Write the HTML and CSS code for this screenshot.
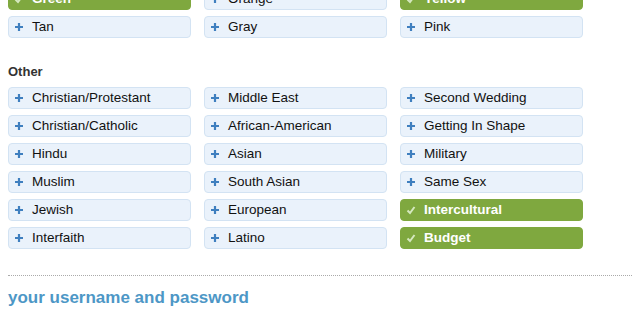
FILE: index.html
```html
<!DOCTYPE html>
<html lang="en">
<head>
    <meta charset="UTF-8">
    <title>Wedding style</title>
    <link rel="stylesheet" href="styles.css">
</head>
<body>
    <div class="page">
        <div class="tagGrid">
            <div class="tag on"><svg class="mark" viewBox="0 0 10 10"><path d="M1.5 5.5 L4 8 L8.5 2"/></svg>Green</div>
            <div class="tag"><svg class="mark" viewBox="0 0 10 10"><path d="M5 1 V9 M1 5 H9"/></svg>Orange</div>
            <div class="tag on"><svg class="mark" viewBox="0 0 10 10"><path d="M1.5 5.5 L4 8 L8.5 2"/></svg>Yellow</div>
            <div class="tag"><svg class="mark" viewBox="0 0 10 10"><path d="M5 1 V9 M1 5 H9"/></svg>Tan</div>
            <div class="tag"><svg class="mark" viewBox="0 0 10 10"><path d="M5 1 V9 M1 5 H9"/></svg>Gray</div>
            <div class="tag"><svg class="mark" viewBox="0 0 10 10"><path d="M5 1 V9 M1 5 H9"/></svg>Pink</div>
        </div>

        <h3 class="groupTitle">Other</h3>
        <div class="tagGrid">
            <div class="tag"><svg class="mark" viewBox="0 0 10 10"><path d="M5 1 V9 M1 5 H9"/></svg>Christian/Protestant</div>
            <div class="tag"><svg class="mark" viewBox="0 0 10 10"><path d="M5 1 V9 M1 5 H9"/></svg>Middle East</div>
            <div class="tag"><svg class="mark" viewBox="0 0 10 10"><path d="M5 1 V9 M1 5 H9"/></svg>Second Wedding</div>
            <div class="tag"><svg class="mark" viewBox="0 0 10 10"><path d="M5 1 V9 M1 5 H9"/></svg>Christian/Catholic</div>
            <div class="tag"><svg class="mark" viewBox="0 0 10 10"><path d="M5 1 V9 M1 5 H9"/></svg>African-American</div>
            <div class="tag"><svg class="mark" viewBox="0 0 10 10"><path d="M5 1 V9 M1 5 H9"/></svg>Getting In Shape</div>
            <div class="tag"><svg class="mark" viewBox="0 0 10 10"><path d="M5 1 V9 M1 5 H9"/></svg>Hindu</div>
            <div class="tag"><svg class="mark" viewBox="0 0 10 10"><path d="M5 1 V9 M1 5 H9"/></svg>Asian</div>
            <div class="tag"><svg class="mark" viewBox="0 0 10 10"><path d="M5 1 V9 M1 5 H9"/></svg>Military</div>
            <div class="tag"><svg class="mark" viewBox="0 0 10 10"><path d="M5 1 V9 M1 5 H9"/></svg>Muslim</div>
            <div class="tag"><svg class="mark" viewBox="0 0 10 10"><path d="M5 1 V9 M1 5 H9"/></svg>South Asian</div>
            <div class="tag"><svg class="mark" viewBox="0 0 10 10"><path d="M5 1 V9 M1 5 H9"/></svg>Same Sex</div>
            <div class="tag"><svg class="mark" viewBox="0 0 10 10"><path d="M5 1 V9 M1 5 H9"/></svg>Jewish</div>
            <div class="tag"><svg class="mark" viewBox="0 0 10 10"><path d="M5 1 V9 M1 5 H9"/></svg>European</div>
            <div class="tag on"><svg class="mark" viewBox="0 0 10 10"><path d="M1.5 5.5 L4 8 L8.5 2"/></svg>Intercultural</div>
            <div class="tag"><svg class="mark" viewBox="0 0 10 10"><path d="M5 1 V9 M1 5 H9"/></svg>Interfaith</div>
            <div class="tag"><svg class="mark" viewBox="0 0 10 10"><path d="M5 1 V9 M1 5 H9"/></svg>Latino</div>
            <div class="tag on"><svg class="mark" viewBox="0 0 10 10"><path d="M1.5 5.5 L4 8 L8.5 2"/></svg>Budget</div>
        </div>

        <hr class="divider">
        <h2 class="sectionTitle">your username and password</h2>
    </div>
</body>
</html>
```

FILE: styles.css
```css
body {
    margin: 0;
    background: #fff;
    font-family: "Liberation Sans", Arial, sans-serif;
    color: #222;
}

.page {
    margin-top: -12px;
    padding: 0 8px;
}

.tagGrid {
    display: grid;
    grid-template-columns: repeat(3, 183px);
    column-gap: 13px;
    row-gap: 6px;
}

.tag {
    box-sizing: border-box;
    display: flex;
    align-items: center;
    height: 22px;
    padding-bottom: 2px;
    border: 1px solid #d3e3f3;
    border-radius: 4px;
    background: #eaf2fb;
    font-size: 13.5px;
    color: #111;
}

.mark {
    width: 10px;
    height: 10px;
    margin: 2px 8px 0 5px;
    fill: none;
    stroke: #3f7fbf;
    stroke-width: 2.2;
}

.tag.on {
    background: #7fa83f;
    border-color: #7fa83f;
    color: #fff;
    font-weight: bold;
}

.tag.on .mark {
    stroke: #d5e8bf;
    stroke-width: 2;
}

.groupTitle {
    margin: 26px 0 8px;
    font-size: 13px;
    font-weight: bold;
    color: #333;
}

.divider {
    margin: 26px 0 0;
    width: 624px;
    border: 0;
    border-top: 1px dotted #aaa;
}

.sectionTitle {
    margin: 12px 0 0;
    font-size: 17px;
    font-weight: bold;
    color: #4d97c6;
}
```
